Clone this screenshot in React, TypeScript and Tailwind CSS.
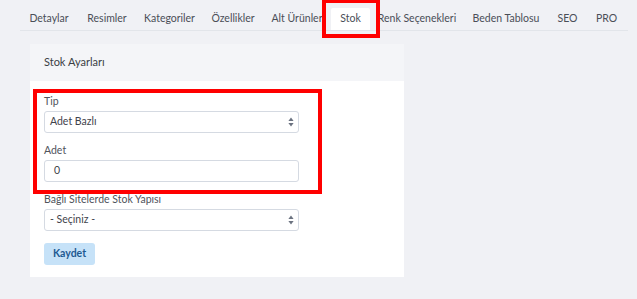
const tabs = [
  { label: 'Detaylar', w: 'w-[58px]' },
  { label: 'Resimler', w: 'w-[58px]' },
  { label: 'Kategoriler', w: 'w-[67px]' },
  { label: 'Özellikler', w: 'w-[60px]' },
  { label: 'Alt Ürünler', w: 'w-[68px]' },
  { label: 'Stok', w: 'w-[39px]' },
  { label: 'Renk Seçenekleri', w: 'w-[94px]' },
  { label: 'Beden Tablosu', w: 'w-[84px]' },
  { label: 'SEO', w: 'w-[39px]' },
  { label: 'PRO', w: 'w-[39px]' },
];

function SelectArrows() {
  return (
    <svg width="6" height="10" viewBox="0 0 6 10" className="text-[#6b7280]">
      <path d="M3 0.5 L5.6 4 H0.4 Z" fill="currentColor" />
      <path d="M3 9.5 L5.6 6 H0.4 Z" fill="currentColor" />
    </svg>
  );
}

function FakeSelect({ value }: { value: string }) {
  return (
    <div className="flex h-[22px] w-[255px] items-center justify-between rounded-[3px] border border-[#d5dae2] bg-white pl-[5px] pr-[4px] text-[10.5px] text-[#3f434b]">
      <span>{value}</span>
      <SelectArrows />
    </div>
  );
}

export default function App() {
  return (
    <main className="relative h-[299px] w-full overflow-hidden bg-[#f0f1f5] font-['Lato',sans-serif]">
      {/* tabs */}
      <div className="ml-[20px] mr-[9px] mt-[8px] flex h-[23px] border-b border-[#e2e5ea]">
        {tabs.map((tab) => (
          <div
            key={tab.label}
            className={`flex h-[22px] shrink-0 items-center justify-center whitespace-nowrap text-[10.5px] text-[#4a4e57] ${tab.w} ${tab.label === 'Stok' ? 'rounded-t-[2px] bg-white' : ''}`}
          >
            {tab.label}
          </div>
        ))}
      </div>

      {/* card */}
      <section className="ml-[30px] mt-[13px] w-[374px] bg-white">
        <div className="flex h-[37px] items-center bg-[#f4f5f8] px-[14px] text-[11px] text-[#3b3e45]">
          Stok Ayarları
        </div>
        <div className="flex flex-col gap-[12px] px-[14px] pb-[12px] pt-[15px]">
          <div className="flex flex-col gap-[4px]">
            <label className="text-[10.5px] leading-[11px] text-[#50545c]">Tip</label>
            <FakeSelect value="Adet Bazlı" />
          </div>
          <div className="flex flex-col gap-[4px]">
            <label className="text-[10.5px] leading-[11px] text-[#50545c]">Adet</label>
            <div className="flex h-[22px] w-[255px] items-center rounded-[3px] border border-[#d5dae2] bg-white pl-[9px] text-[10.5px] text-[#3f434b]">
              0
            </div>
          </div>
          <div className="flex flex-col gap-[4px]">
            <label className="text-[10.5px] leading-[11px] text-[#50545c]">Bağlı Sitelerde Stok Yapısı</label>
            <FakeSelect value="- Seçiniz -" />
          </div>
          <button className="flex h-[22px] w-[51px] items-center justify-center rounded-[3px] bg-[#c6e2f8] text-[10.5px] font-bold text-[#1e5a92]">
            Kaydet
          </button>
        </div>
      </section>

      {/* highlight boxes */}
      <div className="absolute left-[322px] top-[-1px] h-[39px] w-[58px] border-4 border-[#ff0000]" />
      <div className="absolute left-[33px] top-[89px] h-[105px] w-[289px] border-4 border-[#ff0000]" />
    </main>
  );
}
